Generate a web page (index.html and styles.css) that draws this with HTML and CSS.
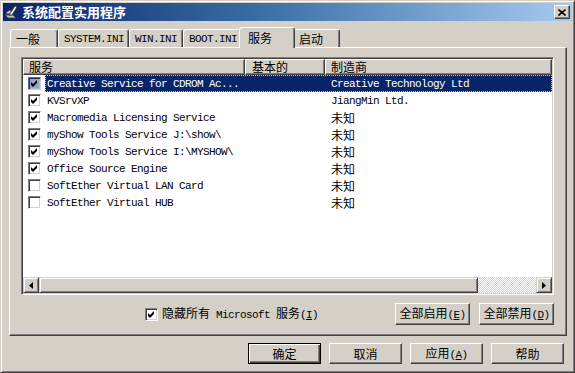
FILE: index.html
```html
<!DOCTYPE html>
<html lang="zh-CN">
<head>
    <meta charset="UTF-8">
    <title>系统配置实用程序</title>
    <link rel="stylesheet" href="styles.css">
</head>
<body>
    <div class="window">
        <div class="titlebar">
            <svg class="app-icon" width="16" height="16" viewBox="0 0 16 16">
                <path d="M1 11 L9 11 L12 14 L4 14 Z" fill="#c0c0c0" stroke="#404040" stroke-width="1"/>
                <path d="M5 11 L11 2 L13 3 L8 11 Z" fill="#fff" stroke="#404040" stroke-width="1"/>
                <path d="M2 9 L6 6 L7 8 L4 10 Z" fill="#e0e0e0" stroke="#606060" stroke-width="0.8"/>
            </svg>
            <span class="title">系统配置实用程序</span>
            <span class="close-btn">
                <svg width="8" height="7" viewBox="0 0 8 7"><path d="M0.5 0.5 L7.5 6.5 M7.5 0.5 L0.5 6.5" stroke="#000" stroke-width="1.6"/></svg>
            </span>
        </div>

        <div class="tabs">
            <div class="tab tab-general">一般</div>
            <div class="tab tab-system m">SYSTEM.INI</div>
            <div class="tab tab-win m">WIN.INI</div>
            <div class="tab tab-boot m">BOOT.INI</div>
            <div class="tab tab-services active">服务</div>
            <div class="tab tab-startup">启动</div>
        </div>

        <div class="panel">
            <div class="listview">
                <div class="header">
                    <div class="hcell col-name">服务</div>
                    <div class="hcell col-basic">基本的</div>
                    <div class="hcell col-maker">制造商</div>
                </div>
                <div class="rows">
                    <div class="row selected">
                        <span class="cb checked"></span>
                        <div class="cells">
                            <span class="c1 m">Creative Service for CDROM Ac...</span>
                            <span class="c2"></span>
                            <span class="c3 m">Creative Technology Ltd</span>
                        </div>
                    </div>
                    <div class="row">
                        <span class="cb checked"></span>
                        <div class="cells">
                            <span class="c1 m">KVSrvXP</span>
                            <span class="c2"></span>
                            <span class="c3 m">JiangMin Ltd.</span>
                        </div>
                    </div>
                    <div class="row">
                        <span class="cb checked"></span>
                        <div class="cells">
                            <span class="c1 m">Macromedia Licensing Service</span>
                            <span class="c2"></span>
                            <span class="c3">未知</span>
                        </div>
                    </div>
                    <div class="row">
                        <span class="cb checked"></span>
                        <div class="cells">
                            <span class="c1 m">myShow Tools Service J:\show\</span>
                            <span class="c2"></span>
                            <span class="c3">未知</span>
                        </div>
                    </div>
                    <div class="row">
                        <span class="cb checked"></span>
                        <div class="cells">
                            <span class="c1 m">myShow Tools Service I:\MYSHOW\</span>
                            <span class="c2"></span>
                            <span class="c3">未知</span>
                        </div>
                    </div>
                    <div class="row">
                        <span class="cb checked"></span>
                        <div class="cells">
                            <span class="c1 m">Office Source Engine</span>
                            <span class="c2"></span>
                            <span class="c3">未知</span>
                        </div>
                    </div>
                    <div class="row">
                        <span class="cb"></span>
                        <div class="cells">
                            <span class="c1 m">SoftEther Virtual LAN Card</span>
                            <span class="c2"></span>
                            <span class="c3">未知</span>
                        </div>
                    </div>
                    <div class="row">
                        <span class="cb"></span>
                        <div class="cells">
                            <span class="c1 m">SoftEther Virtual HUB</span>
                            <span class="c2"></span>
                            <span class="c3">未知</span>
                        </div>
                    </div>
                </div>
                <div class="hscroll">
                    <span class="sb-btn">
                        <svg width="4" height="7" viewBox="0 0 4 7"><path d="M4 0 L0 3.5 L4 7 Z" fill="#000"/></svg>
                    </span>
                    <span class="sb-thumb"></span>
                    <span class="sb-track"></span>
                    <span class="sb-btn">
                        <svg width="4" height="7" viewBox="0 0 4 7"><path d="M0 0 L4 3.5 L0 7 Z" fill="#000"/></svg>
                    </span>
                </div>
            </div>

            <div class="options">
                <label class="hide-ms">
                    <span class="cb checked"></span>
                    <span class="label-text">隐藏所有<span class="m"> Microsoft </span>服务<span class="m">(<u>I</u>)</span></span>
                </label>
                <button class="btn btn-wide">全部启用<span class="m">(<u>E</u>)</span></button>
                <button class="btn btn-wide">全部禁用<span class="m">(<u>D</u>)</span></button>
            </div>
        </div>

        <div class="actions">
            <button class="btn default">确定</button>
            <button class="btn">取消</button>
            <button class="btn">应用<span class="m">(<u>A</u>)</span></button>
            <button class="btn">帮助</button>
        </div>
    </div>
</body>
</html>
```

FILE: styles.css
```css
html, body {
    margin: 0;
    height: 100%;
    background: #d4d0c8;
    overflow: hidden;
}
body {
    font-family: "Noto Sans CJK SC", sans-serif;
    font-size: 12px;
    line-height: 14px;
    color: #000;
}
.m {
    font-family: "Liberation Mono", "Noto Sans CJK SC", monospace;
    font-size: 11px;
    letter-spacing: -0.6px;
}
u {
    text-decoration: underline;
    text-underline-offset: 1px;
}

.window {
    width: 575px;
    height: 373px;
    box-sizing: border-box;
    border: 1px solid;
    border-color: #d4d0c8 #404040 #404040 #d4d0c8;
    box-shadow: inset 1px 1px #fff, inset -1px -1px #808080;
    padding: 2px;
    display: flex;
    flex-direction: column;
}

/* title bar */
.titlebar {
    height: 18px;
    flex: none;
    display: flex;
    align-items: center;
    padding: 0 2px 0 1px;
    background: linear-gradient(to right, #0a246a 0%, #3a6ea5 45%, #a6caf0 100%);
    color: #fff;
}
.app-icon {
    flex: none;
}
.title {
    margin-left: 2px;
    font-weight: bold;
    font-size: 13px;
    line-height: 18px;
}
.close-btn {
    margin-left: auto;
    width: 16px;
    height: 14px;
    box-sizing: border-box;
    background: #d4d0c8;
    border: 1px solid;
    border-color: #fff #404040 #404040 #fff;
    box-shadow: inset -1px -1px #808080;
    display: flex;
    align-items: center;
    justify-content: center;
}
.close-btn svg {
    display: block;
}

/* tabs */
.tabs {
    height: 20px;
    flex: none;
    margin-top: 6px;
    padding-left: 7px;
    display: flex;
    align-items: flex-end;
}
.tab {
    height: 18px;
    box-sizing: border-box;
    border: 1px solid;
    border-bottom: none;
    border-color: #fff #404040 transparent #fff;
    box-shadow: inset -1px 0 #808080;
    border-radius: 3px 3px 0 0;
    padding: 2px 0 0 5px;
    line-height: 14px;
    white-space: nowrap;
}
.tab.m {
    padding-left: 5px;
}
.tab-general { width: 48px; }
.tab-system { width: 71px; }
.tab-win { width: 54px; }
.tab-boot { width: 58px; }
.tab-services { width: 56px; }
.tab-startup { width: 47px; }
.tab.active {
    height: 21px;
    margin: 0 -2px -1px;
    padding-top: 3px;
    padding-left: 8px;
    background: #d4d0c8;
    position: relative;
    z-index: 1;
}

/* panel */
.panel {
    height: 289px;
    flex: none;
    box-sizing: border-box;
    margin: 0 5px 0 6px;
    border: 1px solid;
    border-color: #fff #404040 #404040 #fff;
    box-shadow: inset -1px -1px #808080;
    padding: 9px 0 9px 11px;
}

/* list view */
.listview {
    width: 533px;
    height: 238px;
    box-sizing: border-box;
    border: 1px solid;
    border-color: #808080 #fff #fff #808080;
    box-shadow: inset 1px 1px #404040, inset -1px -1px #d4d0c8;
    padding: 1px;
    background: #fff;
    display: flex;
    flex-direction: column;
}
.header {
    height: 16px;
    flex: none;
    display: flex;
}
.hcell {
    box-sizing: border-box;
    height: 16px;
    background: #d4d0c8;
    border: 1px solid;
    border-color: #fff #404040 #404040 #fff;
    box-shadow: inset -1px -1px #808080;
    padding-left: 5px;
    line-height: 13px;
}
.col-name { width: 222px; }
.col-basic { width: 80px; padding-left: 6px; }
.col-maker { flex: 1; }

.rows {
    flex: 1;
}
.row {
    height: 17px;
    display: flex;
    align-items: center;
}
.row .cb {
    margin: 0 4px 0 5px;
}
.cells {
    flex: 1;
    height: 17px;
    display: flex;
    align-items: center;
    box-sizing: border-box;
    white-space: nowrap;
}
.c1 {
    width: 198px;
    padding-left: 2px;
    overflow: hidden;
}
.c2 {
    width: 80px;
}
.c3 {
    padding-left: 6px;
}
.row.selected .cells {
    background: #0a246a;
    color: #fff;
    outline: 1px dotted #c8c8c8;
    outline-offset: -1px;
}

/* checkbox */
.cb {
    flex: none;
    width: 13px;
    height: 13px;
    box-sizing: border-box;
    border: 1px solid;
    border-color: #808080 #fff #fff #808080;
    box-shadow: inset 1px 1px #404040, inset -1px -1px #d4d0c8;
    background: #fff center / 7px 7px no-repeat;
}
.cb.checked {
    background-image: url("data:image/svg+xml,%3Csvg xmlns='http://www.w3.org/2000/svg' width='7' height='7' viewBox='0 0 7 7'%3E%3Cpath d='M0 2 L2 4 L6 0 L6 3 L2 7 L0 5 Z' fill='%23000'/%3E%3C/svg%3E");
}
.row.selected .cb {
    background-color: #9aa3c2;
    border-color: #5a6590 #c8cce0 #c8cce0 #5a6590;
    box-shadow: inset 1px 1px #2a3460, inset -1px -1px #b0b6d0;
}

/* scrollbar */
.hscroll {
    height: 16px;
    flex: none;
    display: flex;
}
.sb-btn, .sb-thumb {
    box-sizing: border-box;
    height: 16px;
    background: #d4d0c8;
    border: 1px solid;
    border-color: #d4d0c8 #404040 #404040 #d4d0c8;
    box-shadow: inset 1px 1px #fff, inset -1px -1px #808080;
}
.sb-btn {
    width: 16px;
    display: flex;
    align-items: center;
    justify-content: center;
}
.sb-btn svg {
    display: block;
}
.sb-thumb {
    width: 439px;
}
.sb-track {
    flex: 1;
    background-color: #d4d0c8;
    background-image: repeating-conic-gradient(#fff 0 25%, #d4d0c8 0 50%);
    background-size: 2px 2px;
}

/* options row */
.options {
    height: 22px;
    margin-top: 8px;
    width: 533px;
    display: flex;
    align-items: center;
    gap: 9px;
}
.hide-ms {
    display: flex;
    align-items: center;
    margin-left: 124px;
    margin-right: auto;
}
.hide-ms .cb {
    margin-right: 4px;
}
.label-text {
    white-space: nowrap;
}

/* buttons */
.btn {
    width: 73px;
    height: 21px;
    box-sizing: border-box;
    padding: 0;
    background: #d4d0c8;
    border: 1px solid;
    border-color: #fff #404040 #404040 #fff;
    box-shadow: inset -1px -1px #808080;
    font-family: "Noto Sans CJK SC", sans-serif;
    font-size: 12px;
    line-height: 14px;
    color: #000;
    white-space: nowrap;
}
.btn-wide {
    width: 75px;
    height: 22px;
}
.btn.default {
    border-color: #000;
    box-shadow: inset 1px 1px #fff, inset -1px -1px #404040, inset -2px -2px #808080;
}
.actions {
    height: 21px;
    flex: none;
    margin-top: 7px;
    padding-right: 8px;
    display: flex;
    justify-content: flex-end;
    gap: 8px;
}
```
